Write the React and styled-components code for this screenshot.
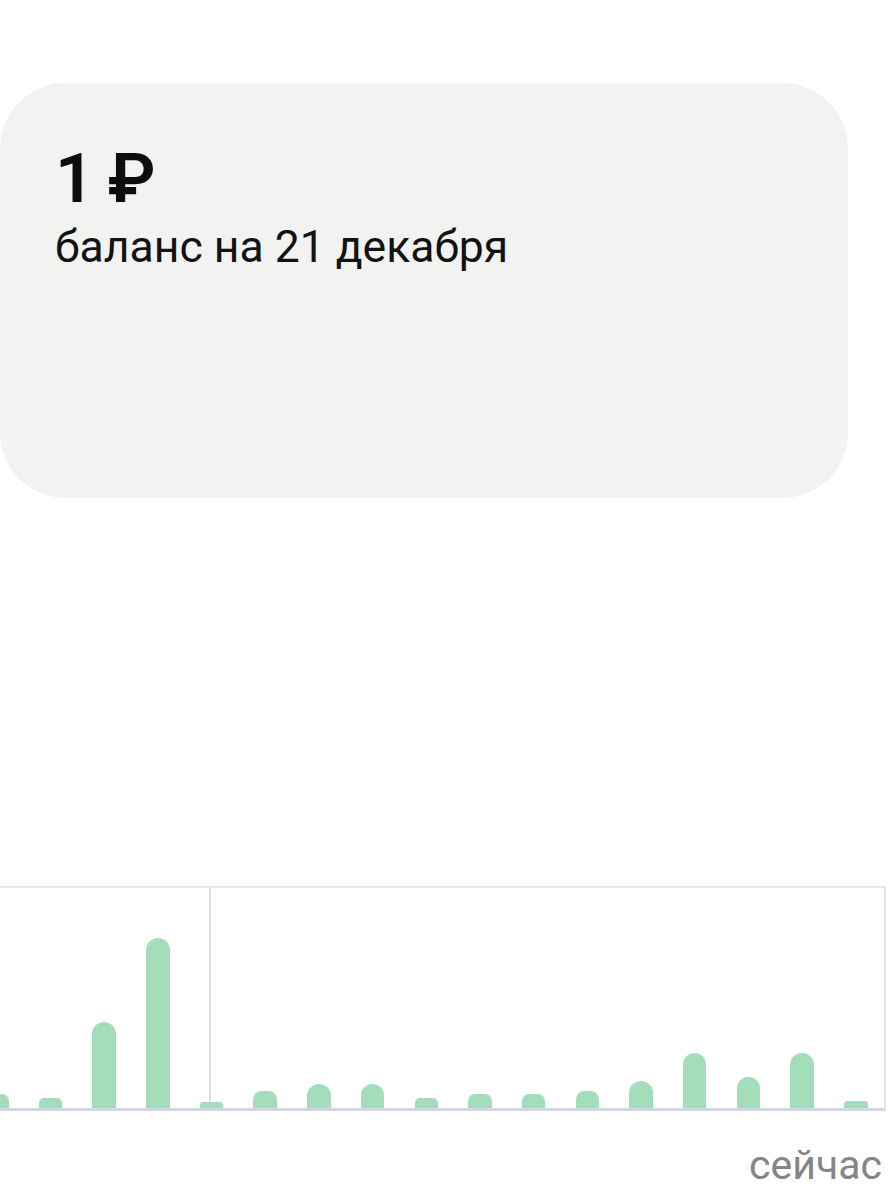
import React from 'react';
import styled, { createGlobalStyle } from 'styled-components';

const GlobalStyle = createGlobalStyle`
  html, body {
    margin: 0;
    padding: 0;
    background: #ffffff;
  }
  body {
    font-family: Roboto, "Noto Sans", "Liberation Sans", sans-serif;
    color: #111111;
    overflow: hidden;
  }
`;

const Page = styled.div`
  width: 892px;
  height: 1200px;
  padding-top: 83px;
  box-sizing: border-box;
`;

const BalanceCard = styled.section`
  width: 848px;
  height: 415px;
  box-sizing: border-box;
  background: #f2f2f1;
  border-radius: 66px;
  padding: 61px 0 0 55px;
`;

const Amount = styled.div`
  font-size: 69px;
  line-height: 1;
  font-weight: 600;
  color: #0d0d0d;
  letter-spacing: -2px;
`;

const Caption = styled.div`
  margin-top: 12px;
  font-size: 44.5px;
  line-height: 1;
  font-weight: 400;
  color: #121212;
`;

const Chart = styled.div`
  position: relative;
  margin-top: 388px;
  width: 886px;
  height: 225px;
  box-sizing: border-box;
  border-top: 2px solid #e6e6e6;
  border-right: 2px solid #e6e6e6;
  border-bottom: 3px solid #d3d6ea;
  overflow: hidden;
`;

const Bars = styled.div`
  display: flex;
  align-items: flex-end;
  gap: 30.2px;
  height: 100%;
  margin-left: -15px;
`;

const Bar = styled.div`
  flex: 0 0 auto;
  width: 23.5px;
  height: ${p => p.$h}px;
  background: #a3ddb9;
  border-radius: ${p => Math.min(12, p.$h / 2)}px ${p => Math.min(12, p.$h / 2)}px 0 0;
`;

const Divider = styled.div`
  position: absolute;
  left: 209px;
  top: 0;
  bottom: 0;
  width: 2px;
  background: rgba(200, 200, 200, 0.6);
`;

const TimeLabel = styled.div`
  margin-top: 34px;
  width: 882px;
  text-align: right;
  font-size: 41px;
  line-height: 1;
  color: #858585;
`;

const heights = [14, 10, 86, 170, 6, 17, 24, 24, 10, 14, 14, 17, 27, 55, 31, 55, 7];

export default function App() {
  return (
    <Page>
      <GlobalStyle />
      <BalanceCard>
        <Amount>1 ₽</Amount>
        <Caption>баланс на 21 декабря</Caption>
      </BalanceCard>
      <Chart>
        <Bars>
          {heights.map((h, i) => (
            <Bar key={i} $h={h} />
          ))}
        </Bars>
        <Divider />
      </Chart>
      <TimeLabel>сейчас</TimeLabel>
    </Page>
  );
}
